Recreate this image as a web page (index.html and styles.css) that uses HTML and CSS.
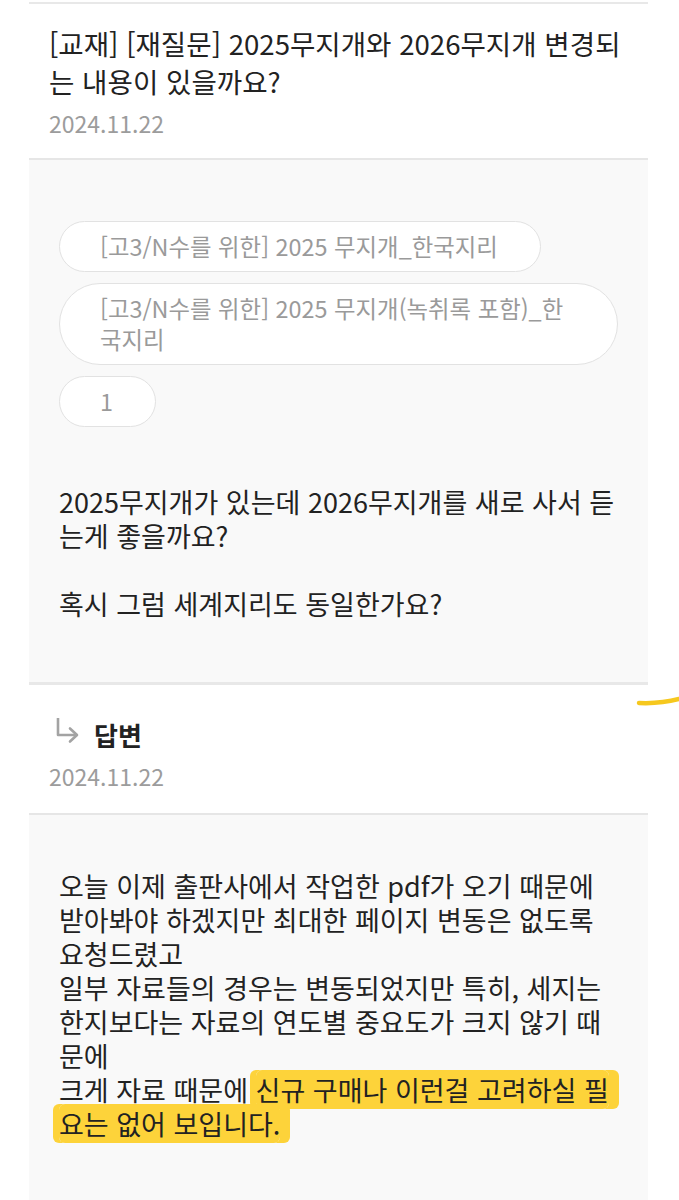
FILE: index.html
```html
<!DOCTYPE html>
<html lang="ko">
<head>
<meta charset="utf-8">
<title>질문 상세</title>
<link rel="stylesheet" href="styles.css">
</head>
<body>
<main class="column">
  <header class="post-head">
    <h1 class="post-title">[교재] [재질문] 2025무지개와 2026무지개 변경되는 내용이 있을까요?</h1>
    <p class="post-date">2024.11.22</p>
  </header>

  <section class="post-body">
    <ul class="chips">
      <li class="chip">[고3/N수를 위한] 2025 무지개_한국지리</li>
      <li class="chip">[고3/N수를 위한] 2025 무지개(녹취록 포함)_한국지리</li>
      <li class="chip">1</li>
    </ul>
    <p class="body-text">2025무지개가 있는데 2026무지개를 새로 사서 듣는게 좋을까요?<br><br>혹시 그럼 세계지리도 동일한가요?</p>
  </section>

  <header class="answer-head">
    <h2 class="answer-title">
      <svg class="reply-icon" width="26" height="28" viewBox="0 0 26 28" aria-hidden="true">
        <path d="M3 2 V19 H21" fill="none" stroke="#a3a3a3" stroke-width="2.6" stroke-linejoin="round"/>
        <path d="M15 12.5 L22 19 L15 25.5" fill="none" stroke="#a3a3a3" stroke-width="2.6" stroke-linecap="round" stroke-linejoin="round"/>
      </svg>
      <span>답변</span>
    </h2>
    <p class="post-date">2024.11.22</p>
  </header>

  <section class="answer-body">
    <p class="body-text">오늘 이제 출판사에서 작업한 pdf가 오기 때문에<br>받아봐야 하겠지만 최대한 페이지 변동은 없도록 요청드렸고<br>일부 자료들의 경우는 변동되었지만 특히, 세지는 한지보다는 자료의 연도별 중요도가 크지 않기 때문에<br>크게 자료 때문에 <mark class="marker">신규 구매나 이런걸 고려하실 필요는 없어 보입니다.</mark></p>
  </section>
</main>

<svg class="stray-mark" width="44" height="14" viewBox="0 0 44 14" aria-hidden="true">
  <path d="M3 9 C 14 9.5, 28 9, 43 5" fill="none" stroke="#f6c81e" stroke-width="4.5" stroke-linecap="round"/>
</svg>
</body>
</html>
```

FILE: styles.css
```css
* { box-sizing: border-box; }

html, body {
  margin: 0;
  padding: 0;
  background: #ffffff;
}

body {
  font-family: "Noto Sans CJK KR", "Noto Sans", sans-serif;
  color: #222222;
  position: relative;
  min-height: 1200px;
}

.column {
  margin: 2px 0 0 29px;
  width: 619px;
  border-top: 2px solid #e8e8e8;
}

.post-head {
  padding: 20px 20px 20px 20px;
  border-bottom: 2px solid #e6e6e6;
}

.post-title {
  margin: 0;
  font-size: 27.6px;
  font-weight: 400;
  line-height: 38px;
  color: #222222;
}

.post-date {
  margin: 8px 0 0 0;
  font-size: 23px;
  line-height: 30px;
  color: #9c9c9c;
}

.post-body {
  background: #f9f9f9;
  padding: 61px 30px 61px 30px;
  border-bottom: 3px solid #e8e8e8;
}

.chips {
  list-style: none;
  margin: 0;
  padding: 0;
  display: flex;
  flex-direction: column;
  align-items: flex-start;
  gap: 11px;
}

.chip {
  background: #ffffff;
  border: 1px solid #e2e2e2;
  border-radius: 999px;
  padding: 9px 42px 9px 40px;
  font-size: 23.4px;
  line-height: 31px;
  color: #9a9a9a;
}

.body-text {
  margin: 0;
  font-size: 27px;
  line-height: 34px;
  color: #222222;
}

.post-body .body-text {
  margin-top: 58px;
}

.answer-head {
  padding: 32px 20px 22px 20px;
  border-bottom: 2px solid #e6e6e6;
}

.answer-title {
  margin: 0;
  display: flex;
  align-items: center;
  gap: 13px;
  font-size: 26px;
  font-weight: 700;
  line-height: 36px;
  color: #222222;
}

.reply-icon {
  margin-left: 6px;
  margin-top: -10px;
  flex: none;
}

.answer-head .post-date {
  margin-top: 8px;
}

.answer-body {
  background: #f9f9f9;
  padding: 54px 30px 80px 30px;
  min-height: 400px;
}

.marker {
  background: #fdd33a;
  color: #222222;
  border-radius: 6px;
  box-shadow: -6px 0 0 #fdd33a, 10px 0 0 #fdd33a;
  -webkit-box-decoration-break: clone;
  box-decoration-break: clone;
}

.stray-mark {
  position: absolute;
  left: 636px;
  top: 694px;
}
```
